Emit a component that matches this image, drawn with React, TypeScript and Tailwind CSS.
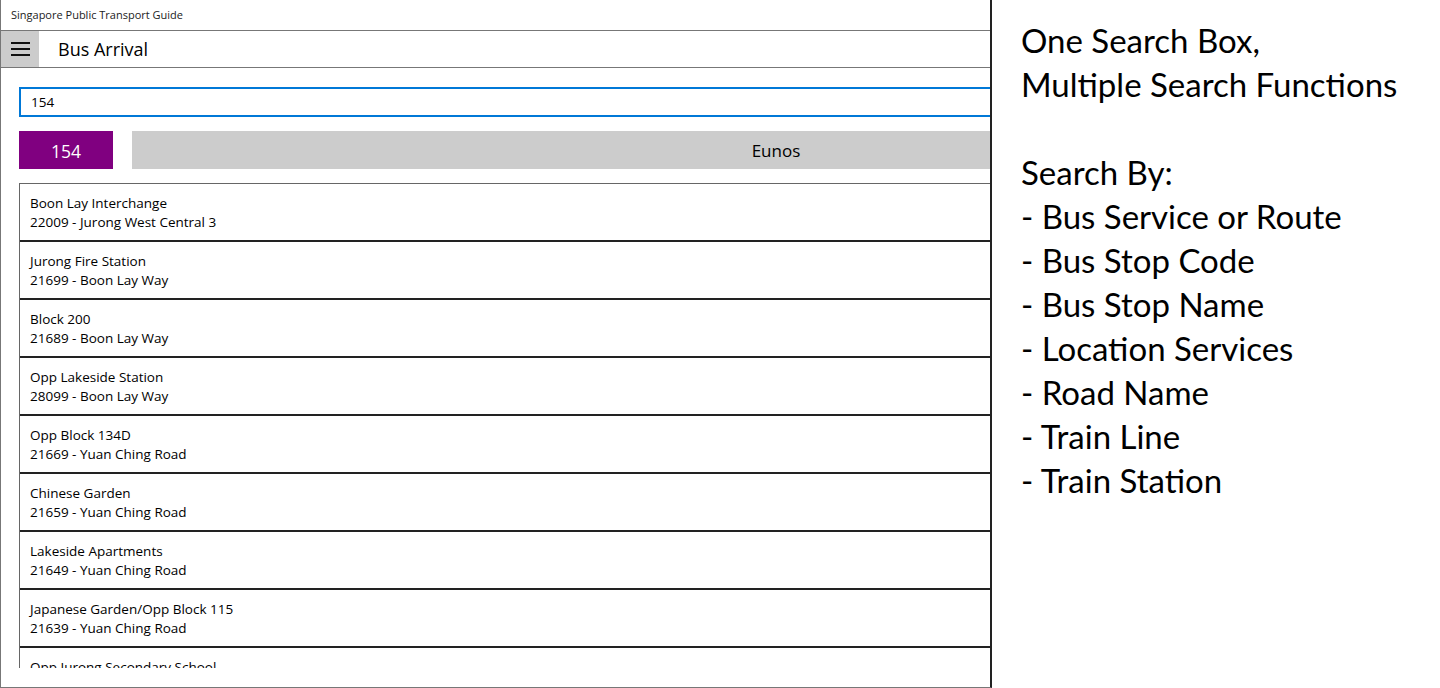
const stops = [
  { name: "Boon Lay Interchange", code: "22009", road: "Jurong West Central 3" },
  { name: "Jurong Fire Station", code: "21699", road: "Boon Lay Way" },
  { name: "Block 200", code: "21689", road: "Boon Lay Way" },
  { name: "Opp Lakeside Station", code: "28099", road: "Boon Lay Way" },
  { name: "Opp Block 134D", code: "21669", road: "Yuan Ching Road" },
  { name: "Chinese Garden", code: "21659", road: "Yuan Ching Road" },
  { name: "Lakeside Apartments", code: "21649", road: "Yuan Ching Road" },
  { name: "Japanese Garden/Opp Block 115", code: "21639", road: "Yuan Ching Road" },
  { name: "Opp Jurong Secondary School", code: "21629", road: "Yuan Ching Road" },
]

const features = [
  "Bus Service or Route",
  "Bus Stop Code",
  "Bus Stop Name",
  "Location Services",
  "Road Name",
  "Train Line",
  "Train Station",
]

const App = () => {
  return (
    <div className="flex w-[1440px] h-[688px] bg-white text-black overflow-hidden">
      {/* app window */}
      <div className="flex flex-col w-[992px] h-[688px] shrink-0 border-l border-b border-[#777] border-r-2 border-r-[#222] font-['Open_Sans',sans-serif]">
        <div className="h-[30px] flex items-center pl-[10px] text-[11px] text-[#222]">Singapore Public Transport Guide</div>
        <div className="flex h-[38px] border-t border-b border-[#777]">
          <button className="w-[38px] h-full bg-[#cccccc] flex flex-col items-center justify-center gap-[4px]">
            <span className="block w-[19px] h-[2px] bg-[#111]" />
            <span className="block w-[19px] h-[2px] bg-[#111]" />
            <span className="block w-[19px] h-[2px] bg-[#111]" />
          </button>
          <div className="flex items-center pl-[19px] text-[18px]">Bus Arrival</div>
        </div>
        <div className="flex-1 overflow-hidden pl-[18px] pt-[19px] pb-[19px]">
          <div className="w-[1401px] h-full flex flex-col overflow-hidden">
            <div className="h-[30px] border-2 border-[#0078d7] flex items-center pl-[10px] text-[13.5px]">154</div>
            <div className="flex gap-[19px] mt-[14px] h-[38px]">
              <div className="w-[94px] bg-[#800080] text-white flex items-center justify-center pt-[2px] text-[17.5px]">154</div>
              <div className="flex-1 bg-[#cccccc] flex items-center justify-center pt-[2px] text-[17px]">Eunos</div>
            </div>
            <div className="mt-[14px] flex-1 overflow-hidden border-l border-t border-[#666]">
              {stops.map((s) => (
                <div key={s.code} className="h-[58px] border-b-2 border-[#222] pl-[10px] pt-[10px] text-[13.5px] leading-[19px]">
                  <div>{s.name}</div>
                  <div>{s.code} - {s.road}</div>
                </div>
              ))}
            </div>
          </div>
        </div>
      </div>
      {/* feature notes */}
      <div className="pl-[29px] pt-[18px] text-[33px] leading-[44px] font-['Lato',sans-serif]">
        <div>One Search Box,</div>
        <div>Multiple Search Functions</div>
        <div className="h-[44px]" />
        <div>Search By:</div>
        {features.map((f) => (
          <div key={f}>- {f}</div>
        ))}
      </div>
    </div>
  )
}

export default App
